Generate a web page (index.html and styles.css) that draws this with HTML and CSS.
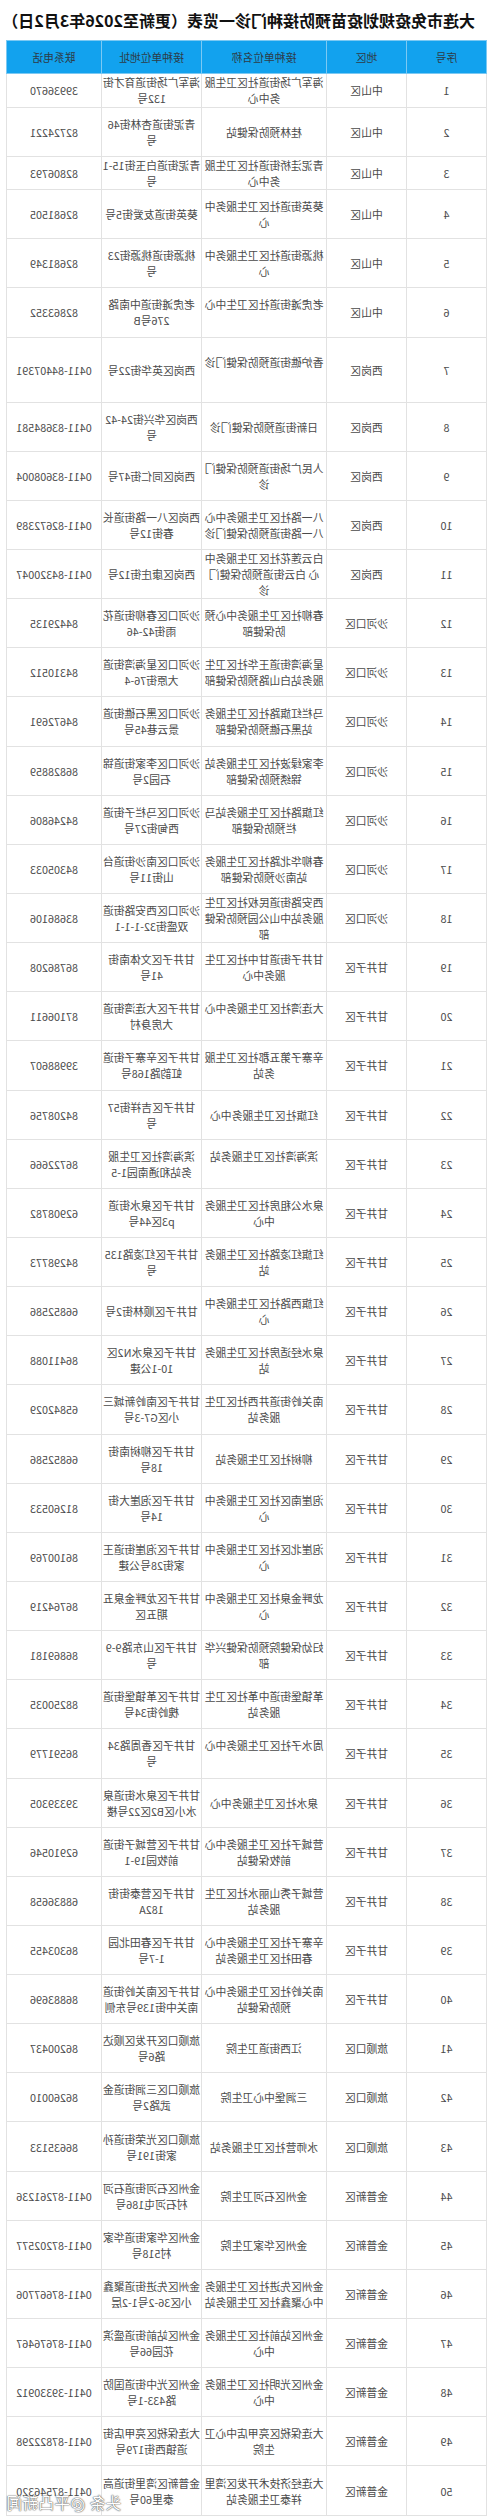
FILE: index.html
```html
<!DOCTYPE html>
<html lang="zh-CN">
<head>
<meta charset="utf-8">
<title>大连市免疫规划疫苗预防接种门诊一览表</title>
<link rel="stylesheet" href="styles.css">
</head>
<body>
<div class="page">
  <h1 class="title">大连市免疫规划疫苗预防接种门诊一览表（更新至2026年3月2日）</h1>
  <table class="clinics">
    <colgroup>
      <col class="c-no"><col class="c-area"><col class="c-name"><col class="c-addr"><col class="c-tel">
    </colgroup>
    <thead>
      <tr><th>序号</th><th>地区</th><th>接种单位名称</th><th>接种单位地址</th><th>联系电话</th></tr>
    </thead>
    <tbody>
      <tr class="short"><td>1</td><td>中山区</td><td>海军广场街道社区卫生服<br>务中心</td><td>海军广场街道育才街<br>132号</td><td>39936670</td></tr>
      <tr><td>2</td><td>中山区</td><td>桂林预防保健站</td><td>青泥街道杏林街46<br>号</td><td>82724221</td></tr>
      <tr class="short"><td>3</td><td>中山区</td><td>青泥洼桥街道社区卫生服<br>务中心</td><td>青泥街道白玉街15-1<br>号</td><td>82806793</td></tr>
      <tr><td>4</td><td>中山区</td><td>葵英街道社区卫生服务中<br>心</td><td>葵英街道友爱街5号</td><td>82681505</td></tr>
      <tr><td>5</td><td>中山区</td><td>桃源街道社区卫生服务中<br>心</td><td>桃源街道桃源街23<br>号</td><td>82681349</td></tr>
      <tr><td>6</td><td>中山区</td><td>老虎滩街道社区卫生中心<br>&nbsp;</td><td>老虎滩街道中南路<br>276号B</td><td>82863352</td></tr>
      <tr class="tall"><td>7</td><td>西岗区</td><td>香炉礁街道预防保健门诊<br>&nbsp;</td><td>西岗区英华街22号</td><td>0411-84407391</td></tr>
      <tr><td>8</td><td>西岗区</td><td>日新街道预防保健门诊</td><td>西岗区华兴街24-42<br>号</td><td>0411-83684581</td></tr>
      <tr><td>9</td><td>西岗区</td><td>人民广场街道预防保健门<br>诊</td><td>西岗区同仁街47号</td><td>0411-83608004</td></tr>
      <tr><td>10</td><td>西岗区</td><td>八一路社区卫生服务中心<br>八一路街道预防保健门诊</td><td>西岗区八一路街道长<br>春街12号</td><td>0411-82672389</td></tr>
      <tr><td>11</td><td>西岗区</td><td>白云莲花社区卫生服务中<br>心 白云街道预防保健门<br>诊</td><td>西岗区康庄街12号</td><td>0411-84320047</td></tr>
      <tr><td>12</td><td>沙河口区</td><td>春柳社区卫生服务中心预<br>防保健部</td><td>沙河口区春柳街道花<br>雨街42-46</td><td>84429135</td></tr>
      <tr><td>13</td><td>沙河口区</td><td>星海湾街道王华社区卫生<br>服务站白山路预防保健部</td><td>沙河口区星海湾街道<br>大原街76-4</td><td>84310512</td></tr>
      <tr><td>14</td><td>沙河口区</td><td>马栏红旗路社区卫生服务<br>站黑石礁预防保健部</td><td>沙河口区黑石礁街道<br>景云巷45号</td><td>84672691</td></tr>
      <tr><td>15</td><td>沙河口区</td><td>李家绿波社区卫生服务站<br>锦绣预防保健部</td><td>沙河口区李家街道锦<br>石园2号</td><td>86828859</td></tr>
      <tr><td>16</td><td>沙河口区</td><td>红旗路社区卫生服务站马<br>栏预防保健部</td><td>沙河口区马栏子街道<br>西甸街27号</td><td>84246806</td></tr>
      <tr><td>17</td><td>沙河口区</td><td>春柳华北路社区卫生服务<br>站南沙预防保健部</td><td>沙河口区南沙街道台<br>山街11号</td><td>84305033</td></tr>
      <tr><td>18</td><td>沙河口区</td><td>西安路街道民权社区卫生<br>服务站中山公园预防保健<br>部</td><td>沙河口区西安路街道<br>双盛街32-1-1-1</td><td>83686106</td></tr>
      <tr><td>19</td><td>甘井子区</td><td>甘井子街道甘中社区卫生<br>服务中心</td><td>甘井子区文体南街<br>41号</td><td>86786208</td></tr>
      <tr><td>20</td><td>甘井子区</td><td>大连湾社区卫生服务中心<br>&nbsp;</td><td>甘井子区大连湾街道<br>大房身村</td><td>87106611</td></tr>
      <tr><td>21</td><td>甘井子区</td><td>辛寨子第五郡社区卫生服<br>务站</td><td>甘井子区辛寨子街道<br>虹韵路168号</td><td>39988607</td></tr>
      <tr><td>22</td><td>甘井子区</td><td>红旗社区卫生服务中心</td><td>甘井子区吉祥街57<br>号</td><td>84208756</td></tr>
      <tr><td>23</td><td>甘井子区</td><td>滨海湾社区卫生服务站<br>&nbsp;</td><td>滨海湾社区卫生服<br>务站和通南园1-5</td><td>86722666</td></tr>
      <tr><td>24</td><td>甘井子区</td><td>泉水公租房社区卫生服务<br>中心</td><td>甘井子区泉水街道<br>p3区44号</td><td>62908782</td></tr>
      <tr><td>25</td><td>甘井子区</td><td>红旗红凌路社区卫生服务<br>站</td><td>甘井子区红凌路135<br>号</td><td>84298773</td></tr>
      <tr><td>26</td><td>甘井子区</td><td>红旗西路社区卫生服务中<br>心</td><td>甘井子区顺林街2号</td><td>66852586</td></tr>
      <tr><td>27</td><td>甘井子区</td><td>泉水经适房社区卫生服务<br>站</td><td>甘井子区泉水N2区<br>10-1公建</td><td>86411088</td></tr>
      <tr><td>28</td><td>甘井子区</td><td>南关岭街道井西社区卫生<br>服务站</td><td>甘井子区南岭新城三<br>小区G7-3号</td><td>65842029</td></tr>
      <tr><td>29</td><td>甘井子区</td><td>柳树社区卫生服务站</td><td>甘井子区柳树南街<br>18号</td><td>66852586</td></tr>
      <tr><td>30</td><td>甘井子区</td><td>泡崖南区社区卫生服务中<br>心</td><td>甘井子区泡崖大街<br>14号</td><td>81260533</td></tr>
      <tr><td>31</td><td>甘井子区</td><td>泡崖北区社区卫生服务中<br>心</td><td>甘井子区泡崖街道王<br>家街28号公建</td><td>86100769</td></tr>
      <tr><td>32</td><td>甘井子区</td><td>龙畔金泉社区卫生服务中<br>心</td><td>甘井子区龙畔金泉五<br>期五区</td><td>86764219</td></tr>
      <tr><td>33</td><td>甘井子区</td><td>妇幼保健院预防保健兴华<br>部</td><td>甘井子区山东路9-9<br>号</td><td>86869181</td></tr>
      <tr><td>34</td><td>甘井子区</td><td>革镇堡街道中革社区卫生<br>服务站</td><td>甘井子区革镇堡街道<br>槐岭街34号</td><td>88250035</td></tr>
      <tr><td>35</td><td>甘井子区</td><td>周水子社区卫生服务中心<br>&nbsp;</td><td>甘井子区香周路34<br>号</td><td>86591779</td></tr>
      <tr><td>36</td><td>甘井子区</td><td>泉水社区卫生服务中心</td><td>甘井子区泉水街道泉<br>水小区B2区22号楼</td><td>39339305</td></tr>
      <tr><td>37</td><td>甘井子区</td><td>营城子社区卫生服务中心<br>前牧保健站</td><td>甘井子区营城子街道<br>前牧园19-1</td><td>62910546</td></tr>
      <tr><td>38</td><td>甘井子区</td><td>营城子秀山丽水社区卫生<br>服务站</td><td>甘井子区营泰街街<br>182A</td><td>68836658</td></tr>
      <tr><td>39</td><td>甘井子区</td><td>辛寨子社区卫生服务中心<br>春田社区卫生服务站</td><td>甘井子区春田北园<br>1-7号</td><td>86303455</td></tr>
      <tr><td>40</td><td>甘井子区</td><td>南关岭社区卫生服务中心<br>预防保健站</td><td>甘井子区南关岭街道<br>南关中街139号东侧</td><td>86883696</td></tr>
      <tr><td>41</td><td>旅顺口区</td><td>江西街道卫生院</td><td>旅顺口区开发区顺达<br>路6号</td><td>86200437</td></tr>
      <tr><td>42</td><td>旅顺口区</td><td>三涧堡中心卫生院</td><td>旅顺口区三涧街道金<br>武路2号</td><td>86260010</td></tr>
      <tr><td>43</td><td>旅顺口区</td><td>水师营社区卫生服务站</td><td>旅顺口区光荣街道孙<br>家街191号</td><td>86635133</td></tr>
      <tr><td>44</td><td>金普新区</td><td>金州区石河卫生院</td><td>金州区石河街道石河<br>村石河屯186号</td><td>0411-87261236</td></tr>
      <tr><td>45</td><td>金普新区</td><td>金州区华家卫生院</td><td>金州区华家街道华家<br>村518号</td><td>0411-87202577</td></tr>
      <tr><td>46</td><td>金普新区</td><td>金州区先进社区卫生服务<br>中心聚鑫社区卫生服务站</td><td>金州区先进街道聚鑫<br>小区36-2号1-2层</td><td>0411-87667706</td></tr>
      <tr><td>47</td><td>金普新区</td><td>金州区站前社区卫生服务<br>中心</td><td>金州区站前街道盛滨<br>花园66号</td><td>0411-87676467</td></tr>
      <tr><td>48</td><td>金普新区</td><td>金州区光明社区卫生服务<br>中心</td><td>金州区光中街道国防<br>路433-1号</td><td>0411-39330912</td></tr>
      <tr><td>49</td><td>金普新区</td><td>大连保税区亮甲店中心卫<br>生院</td><td>大连保税区亮甲店街<br>道镇西街179号</td><td>0411-87822298</td></tr>
      <tr><td>50</td><td>金普新区</td><td>大连经济技术开发区湾里<br>祥泰卫生服务站</td><td>金普新区湾里街道高<br>泰里60号</td><td>0411-87546320</td></tr>
    </tbody>
  </table>
  <div class="watermark">头条 @平凸新闻</div>
</div>
</body>
</html>
```

FILE: styles.css
```css
html, body {
  margin: 0;
  padding: 0;
  background: #ffffff;
}

body {
  font-family: "Noto Sans CJK SC", "Noto Sans", sans-serif;
}

.page {
  position: relative;
  width: 500px;
  transform: scaleX(-1);
  transform-origin: 250px 0;
}

.title {
  margin: 0;
  padding: 9px 0 0 25px;
  font-size: 16px;
  line-height: 22px;
  font-weight: 700;
  color: #111111;
  white-space: nowrap;
}

.clinics {
  margin: 9px 0 0 13px;
  width: 480px;
  border-collapse: collapse;
  table-layout: fixed;
}

.c-no { width: 80px; }
.c-area { width: 80px; }
.c-name { width: 125px; }
.c-addr { width: 100px; }
.c-tel { width: 95px; }

.clinics th,
.clinics td {
  padding: 0;
  border: 1px solid #e2e2e2;
  font-size: 10.8px;
  line-height: 16px;
  text-align: center;
  vertical-align: middle;
  white-space: nowrap;
}

.clinics thead tr {
  height: 33px;
}

.clinics th {
  background: #12a2ee;
  color: #2d3b47;
  font-weight: 400;
  border-color: #7cc9f3;
}

.clinics td {
  color: #4a4a4a;
}

.clinics tbody tr {
  height: 49.15px;
}

.clinics tbody tr.short {
  height: 33.5px;
}

.clinics tbody tr.tall {
  height: 65px;
}

.watermark {
  position: absolute;
  right: 6px;
  bottom: 4px;
  font-size: 15.5px;
  line-height: 20px;
  color: #ffffff;
  letter-spacing: 0.5px;
  text-shadow: 0 0 1px #666, 0 0 1px #666, 0 0 2px #888;
}
```
